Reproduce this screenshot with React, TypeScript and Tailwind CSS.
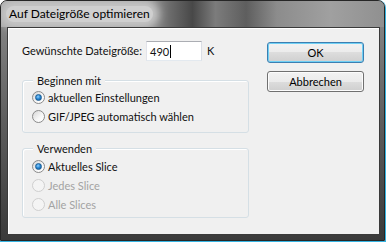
const font = { fontFamily: 'Lato, "Noto Sans", "Liberation Sans", sans-serif' };

type RadioProps = {
  label: string;
  checked?: boolean;
  disabled?: boolean;
};

const Radio = ({ label, checked, disabled }: RadioProps) => (
  <div className="flex h-[19px] items-center whitespace-nowrap">
    <span
      className={
        disabled
          ? "flex h-[13px] w-[13px] items-center justify-center rounded-full border border-[#cfcfcf] bg-[#f4f4f4]"
          : "flex h-[13px] w-[13px] items-center justify-center rounded-full border border-[#8a8a8a] bg-[linear-gradient(135deg,#d6d6d6,#f8f8f8_60%,#ffffff)]"
      }
    >
      {checked && (
        <span className="h-[7px] w-[7px] rounded-full border border-[#1b5e96] bg-[radial-gradient(circle_at_40%_35%,#8fd0ff,#2b8ad6_45%,#0d4f8c)]" />
      )}
    </span>
    <span
      className={
        disabled
          ? "ml-[3px] text-[11px] leading-none text-[#a3a3a3]"
          : "ml-[3px] text-[11px] leading-none text-[#111]"
      }
    >
      {label}
    </span>
  </div>
);

type GroupProps = {
  title: string;
  className: string;
  children: React.ReactNode;
};

const Group = ({ title, className, children }: GroupProps) => (
  <div
    className={`relative w-[227px] rounded-[3px] border border-[#d5dfe5] pl-[9px] shadow-[inset_1px_1px_0_#ffffff] ${className}`}
  >
    <span className="absolute left-[10px] top-[-8px] whitespace-nowrap bg-[#f0f0f0] px-[4px] text-[11px] leading-[15px] text-[#111]">
      {title}
    </span>
    {children}
  </div>
);

export default function App() {
  return (
    <div className="h-[242px] w-[386px] bg-white" style={font}>
      <div className="h-[242px] w-[386px] rounded-t-[8px] border-b border-r border-[#36b4e2]">
        <div className="flex h-full w-full flex-col overflow-hidden rounded-t-[7px] border border-[#262626] bg-[linear-gradient(to_bottom,#8c8c8c,#5e5e5e_50%,#3a3a3a)]">
          <div className="flex h-[26px] shrink-0 items-center bg-[linear-gradient(to_right,#a9a9a9_0%,#9a9a9a_38%,#6c6c6c_44%,#484848_50%,#7c7c7c_56%,#5e5e5e_64%,#8c8c8c_72%,#a0a0a0_86%,#909090_100%)] pl-[5px]">
            <span className="whitespace-nowrap rounded-[8px] bg-[#cfcfcf] px-[3px] text-[12px] leading-[16px] text-black shadow-[0_0_8px_6px_#c6c6c6]">
              Auf Dateigröße optimieren
            </span>
          </div>
          <div className="flex min-h-0 flex-1 pb-[5px] pl-[6px] pr-[4px]">
            <div className="flex flex-1 border border-[#3a3a3a] bg-[#f0f0f0] pl-[14px] pt-[13px] shadow-[inset_1px_1px_0_#ffffff]">
              <div className="flex flex-col">
                <div className="flex h-[20px] items-center whitespace-nowrap text-[11px] text-[#111]">
                  <span className="w-[124px]">Gewünschte Dateigröße:</span>
                  <div className="flex h-[20px] w-[56px] items-center border border-[#abadb3] border-b-[#e3e9ef] border-l-[#e2e3ea] border-r-[#dbdfe6] bg-white pl-[3px]">
                    <span className="leading-none">490</span>
                    <span className="ml-[1px] h-[13px] w-px bg-black" />
                  </div>
                  <span className="ml-[5px]">K</span>
                </div>
                <Group title="Beginnen mit" className="mt-[19px] pb-[6px] pt-[7px]">
                  <Radio label="aktuellen Einstellungen" checked />
                  <Radio label="GIF/JPEG automatisch wählen" />
                </Group>
                <Group title="Verwenden" className="mt-[15px] pb-[3px] pt-[8px]">
                  <Radio label="Aktuelles Slice" checked />
                  <Radio label="Jedes Slice" disabled />
                  <Radio label="Alle Slices" disabled />
                </Group>
              </div>
              <div className="ml-[18px] flex flex-col gap-[8px] pt-[1px]">
                <button className="h-[21px] w-[97px] rounded-[3px] border border-[#3c7fb1] bg-[linear-gradient(to_bottom,#f2f2f2,#ebebeb_50%,#dddddd_50%,#cfcfcf)] text-[11px] leading-none text-black shadow-[inset_0_0_0_1px_#6fd0f5]">
                  OK
                </button>
                <button className="h-[21px] w-[97px] rounded-[3px] border border-[#707070] bg-[linear-gradient(to_bottom,#f2f2f2,#ebebeb_50%,#dddddd_50%,#cfcfcf)] text-[11px] leading-none text-black shadow-[inset_0_0_0_1px_#fcfcfc]">
                  Abbrechen
                </button>
              </div>
            </div>
          </div>
        </div>
      </div>
    </div>
  );
}
